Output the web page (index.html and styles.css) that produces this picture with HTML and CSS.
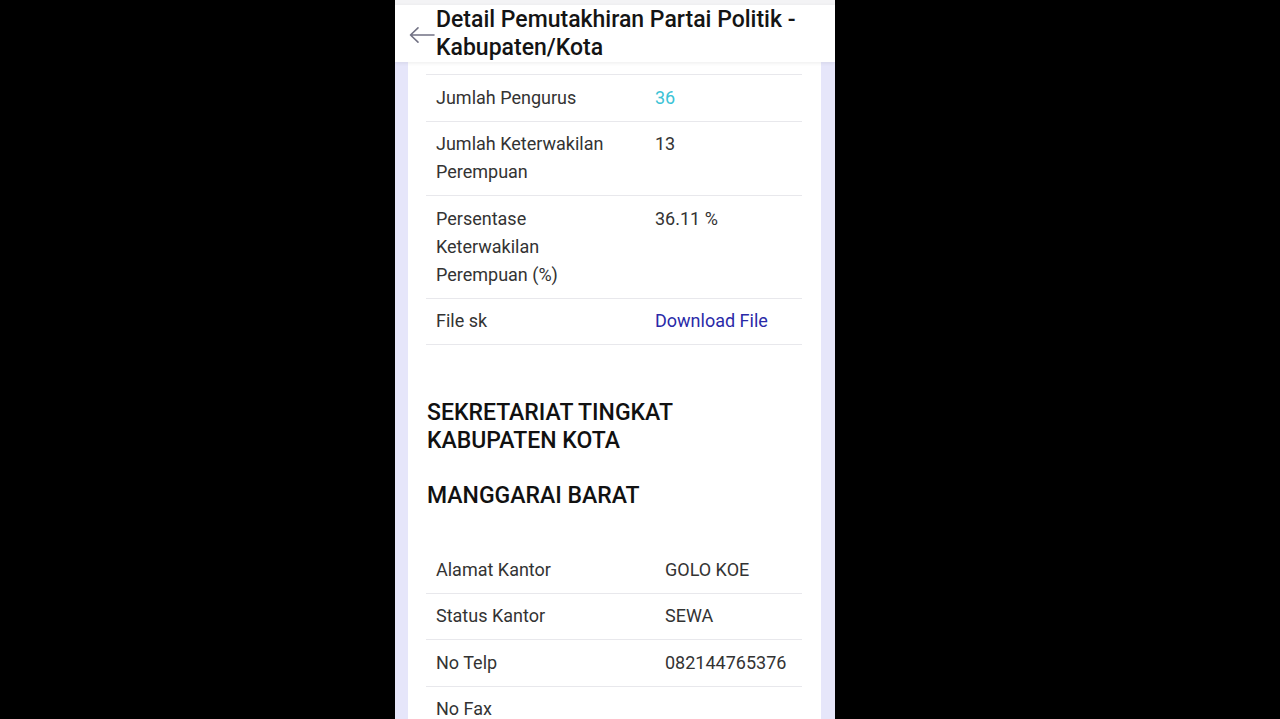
FILE: index.html
```html
<!DOCTYPE html>
<html lang="id">
<head>
<meta charset="utf-8">
<title>Detail Pemutakhiran Partai Politik - Kabupaten/Kota</title>
<link rel="stylesheet" href="styles.css">
</head>
<body>
<div class="phone">
  <div class="status"></div>
  <header class="appbar">
    <span class="back">
      <svg width="26" height="18" viewBox="0 0 26 18"><path d="M1.5 9 H25 M1.5 9 L9 1.8 M1.5 9 L9 16.2" fill="none" stroke="#727284" stroke-width="1.6" stroke-linecap="round" stroke-linejoin="round"/></svg>
    </span>
    <h1 class="title">Detail Pemutakhiran Partai Politik - Kabupaten/Kota</h1>
  </header>
  <main class="content">
    <section class="card">
      <div class="table t1">
        <div class="row">
          <div class="cell label">Jumlah Pengurus</div>
          <div class="cell val-cyan">36</div>
        </div>
        <div class="row">
          <div class="cell label">Jumlah Keterwakilan Perempuan</div>
          <div class="cell">13</div>
        </div>
        <div class="row">
          <div class="cell label">Persentase Keterwakilan Perempuan (%)</div>
          <div class="cell">36.11 %</div>
        </div>
        <div class="row">
          <div class="cell label">File sk</div>
          <div class="cell"><a class="link" href="#">Download File</a></div>
        </div>
      </div>

      <h2 class="heading first">SEKRETARIAT TINGKAT KABUPATEN KOTA</h2>
      <h2 class="heading second">MANGGARAI BARAT</h2>

      <div class="table t2">
        <div class="row nobord">
          <div class="cell">Alamat Kantor</div>
          <div class="cell">GOLO KOE</div>
        </div>
        <div class="row">
          <div class="cell">Status Kantor</div>
          <div class="cell">SEWA</div>
        </div>
        <div class="row">
          <div class="cell">No Telp</div>
          <div class="cell">082144765376</div>
        </div>
        <div class="row">
          <div class="cell">No Fax</div>
          <div class="cell"></div>
        </div>
      </div>
    </section>
  </main>
</div>
</body>
</html>
```

FILE: styles.css
```css
html, body {
  margin: 0;
  padding: 0;
  background: #000;
  height: 719px;
  overflow: hidden;
}

body {
  font-family: Roboto, "Noto Sans", Arial, sans-serif;
}

.phone {
  width: 440px;
  height: 719px;
  margin-left: 395px;
  background: #e6e6fa;
  overflow: hidden;
  display: flex;
  flex-direction: column;
}

.status {
  height: 5px;
  background: #f3f3f5;
  flex: none;
}

.appbar {
  position: relative;
  z-index: 2;
  flex: none;
  height: 57px;
  background: #fff;
  display: flex;
  align-items: flex-start;
  box-shadow: 0 1px 4px rgba(0, 0, 0, 0.08);
}

.back {
  width: 41px;
  height: 57px;
  display: flex;
  align-items: center;
  justify-content: flex-start;
  padding-left: 14px;
  box-sizing: border-box;
  flex: none;
}

.back svg {
  display: block;
  margin-top: 2px;
}

.title {
  margin: 1px 0 0 0;
  font-size: 23px;
  line-height: 28px;
  font-weight: 500;
  color: #141414;
  letter-spacing: 0;
}

.content {
  flex: 1;
  padding: 0 14px 0 13px;
}

.card {
  background: #fff;
  height: 100%;
  padding: 12px 19px 0 18px;
  box-sizing: border-box;
}

.table .row {
  display: grid;
  border-top: 1px solid #e8e8ec;
}

.t1 .row {
  grid-template-columns: 219px 1fr;
}

.t1 .row:last-child {
  border-bottom: 1px solid #e8e8ec;
}

.t2 .row {
  grid-template-columns: 229px 1fr;
}

.t2 .row.nobord {
  border-top: none;
}

.cell {
  padding: 8.75px 10px;
  font-size: 18px;
  line-height: 28px;
  color: #333;
}

.t1 .cell.label {
  padding-right: 28px;
}

.val-cyan {
  color: #3cc3d6;
}

.link {
  color: #2a2aa8;
  text-decoration: none;
}

.heading {
  margin: 0;
  font-size: 23px;
  line-height: 28px;
  font-weight: 500;
  color: #111;
  padding-left: 1px;
  width: 290px;
}

.heading.first {
  margin-top: 54px;
}

.heading.second {
  margin-top: 27px;
}

.t2 {
  margin-top: 37px;
}
```
